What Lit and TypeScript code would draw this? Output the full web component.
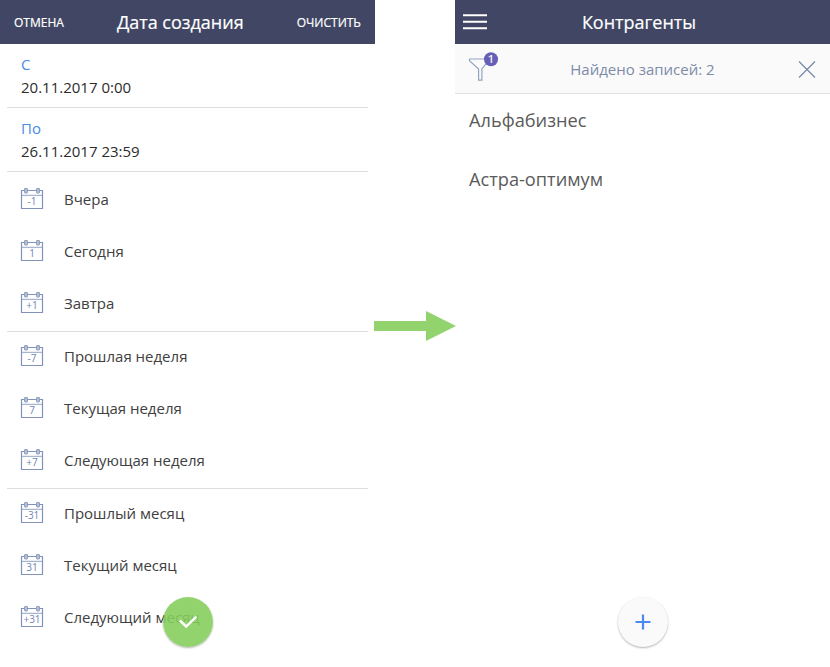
import { LitElement, html, css } from "lit";
import { customElement, property } from "lit/decorators.js";

@customElement("calendar-icon")
class CalendarIcon extends LitElement {
  @property() label = "";

  static styles = css`
    :host { display: block; width: 22px; height: 22px; }
    svg { display: block; overflow: visible; }
    .frame { fill: none; stroke: #8193bb; stroke-width: 1.2; }
    .rule { stroke: #a9b6d0; stroke-width: 1.3; }
    .clip { fill: #b5bfd4; stroke: #8f9ec0; stroke-width: 1; }
    text { font: 10px "Open Sans", sans-serif; fill: #7284b2; text-anchor: middle; }
  `;

  render() {
    return html`<svg width="22" height="22" viewBox="0 0 22 22">
      <path class="frame" d="M.5 2.5H21.5V20.5H.5Z" />
      <path class="rule" d="M1 7.4H21" />
      <rect class="clip" x="3.5" y=".5" width="3" height="4.5" rx=".5" />
      <rect class="clip" x="15.5" y=".5" width="3" height="4.5" rx=".5" />
      <text x="11" y="17">${this.label}</text>
    </svg>`;
  }
}

@customElement("filter-screen")
class FilterScreen extends LitElement {
  static styles = css`
    :host { display: block; position: relative; width: 375px; height: 667px; font-family: "Open Sans", sans-serif; }
    header { display: flex; align-items: center; justify-content: space-between; box-sizing: border-box;
      height: 44px; padding: 0 14px; background: #404663; color: #fff; }
    .action { font-size: 12px; line-height: 44px; padding-top: 1px; -webkit-text-stroke: .2px #fff; }
    .title { font-size: 18px; line-height: 44px; -webkit-text-stroke: .2px #fff; }
    .body { margin: 0 7px; }
    .field { box-sizing: border-box; height: 64px; padding: 9px 14px 0; border-bottom: 1px solid #ddd; font-size: 15px; line-height: 23px; color: #2c2c2c; }
    .label { color: #4a8ae8; }
    .group { border-bottom: 1px solid #ddd; }
    .group:nth-of-type(3) { padding-top: 3px; }
    .group:last-child { border: 0; }
    .row { display: flex; align-items: center; box-sizing: border-box; height: 52px; padding: 0 0 4px 14px; gap: 21px; }
    .name { font-size: 15px; line-height: 20px; color: #404040; }
    .confirm { position: absolute; left: 163px; top: 597px; width: 50px; height: 50px; border-radius: 50%;
      background: rgba(132, 206, 92, .89); box-shadow: 0 1px 2px rgba(0, 0, 0, .3); }
    .confirm svg { display: block; }
  `;

  groups = [
    [["-1", "Вчера"], ["1", "Сегодня"], ["+1", "Завтра"]],
    [["-7", "Прошлая неделя"], ["7", "Текущая неделя"], ["+7", "Следующая неделя"]],
    [["-31", "Прошлый месяц"], ["31", "Текущий месяц"], ["+31", "Следующий месяц"]],
  ];

  render() {
    return html`
      <header><span class="action">ОТМЕНА</span><span class="title">Дата создания</span><span class="action">ОЧИСТИТЬ</span></header>
      <div class="body">
        <div class="field"><div class="label">С</div><div>20.11.2017 0:00</div></div>
        <div class="field"><div class="label">По</div><div>26.11.2017 23:59</div></div>
        ${this.groups.map((g) => html`<div class="group">${g.map(([n, t]) => html`<div class="row"><calendar-icon label=${n}></calendar-icon><span class="name">${t}</span></div>`)}</div>`)}
      </div>
      <div class="confirm"><svg width="50" height="50"><path d="M16.8 23.5L23.2 29.5L33.3 19.7" fill="none" stroke="#fff" stroke-width="2.4" /></svg></div>
    `;
  }
}

@customElement("accounts-screen")
class AccountsScreen extends LitElement {
  static styles = css`
    :host { display: block; position: relative; width: 375px; height: 667px; font-family: "Open Sans", sans-serif; }
    header { display: grid; grid-template-columns: 24px 1fr 31px; align-items: center; box-sizing: border-box;
      height: 44px; padding: 0 8px; background: #404663; color: #fff; }
    .title { font-size: 18px; line-height: 44px; text-align: center; -webkit-text-stroke: .2px #fff; }
    .bar { display: grid; grid-template-columns: 34px 1fr 34px; align-items: center; box-sizing: border-box; height: 50px;
      padding: 0 8px; background: #fafafa; border-bottom: 1px solid #e2e2e2; }
    .found { font-size: 15px; line-height: 20px; color: #7d8ba9; text-align: center; }
    svg { display: block; overflow: visible; }
    .count { font: 11.5px "Open Sans", sans-serif; fill: #fff; stroke: #fff; stroke-width: .2; text-anchor: middle; }
    .item { height: 59px; line-height: 53px; padding-left: 14px; font-size: 18.2px; color: #5a5a5a; }
    .add { position: absolute; left: 163px; top: 597px; width: 50px; height: 50px; border-radius: 50%;
      background: #fafafa; box-shadow: 0 1px 2px rgba(0, 0, 0, .3); }
  `;

  render() {
    return html`
      <header>
        <svg width="24" height="16"><path d="M0 1.3H24M0 7.8H24M0 14.3H24" stroke="#fff" stroke-width="1.9" /></svg>
        <span class="title">Контрагенты</span>
      </header>
      <div class="bar">
        <svg width="34" height="50">
          <path d="M6.5 15H25.5V16.5L18.9 25V36.1H15.6V25L6.5 16.8Z" fill="none" stroke="#94a3c5" stroke-width="1.2" />
          <circle cx="28" cy="15.2" r="7" fill="#655fb5" />
          <text class="count" x="28" y="19.3">1</text>
        </svg>
        <span class="found">Найдено записей: 2</span>
        <svg width="34" height="50"><path d="M11 17.5L27 33.5M27 17.5L11 33.5" stroke="#7285a8" stroke-width="1.1" /></svg>
      </div>
      <div class="item">Альфабизнес</div>
      <div class="item">Астра-оптимум</div>
      <div class="add"><svg width="50" height="50"><path d="M17.5 25H32.5M25 17.5V32.5" stroke="#4a8af0" stroke-width="2.2" /></svg></div>
    `;
  }
}

@customElement("app-root")
class AppRoot extends LitElement {
  static styles = css`
    :host { display: flex; width: 830px; height: 667px; overflow: hidden; background: #fff; }
    .gap { display: flex; width: 80px; height: 652px; align-items: center; z-index: 1; }
    svg { display: block; margin-left: -1px; flex: none; }
  `;

  render() {
    return html`
      <filter-screen></filter-screen>
      <div class="gap"><svg width="82" height="30"><path d="M0 10H52V0L82 15L52 30V20H0Z" fill="#92d36e" /></svg></div>
      <accounts-screen></accounts-screen>
    `;
  }
}
